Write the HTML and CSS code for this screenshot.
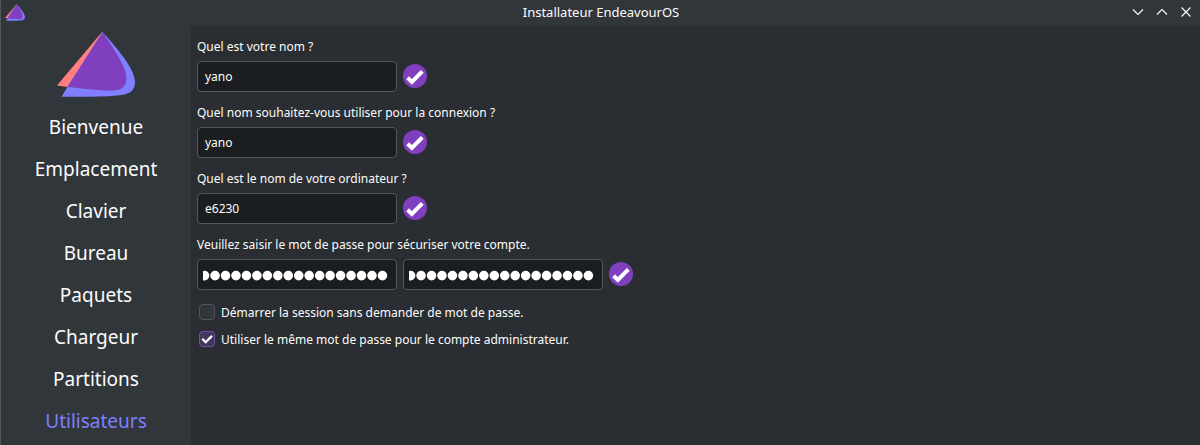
FILE: index.html
```
<!DOCTYPE html>
<html lang="fr">
<head>
<meta charset="utf-8">
<title>Installateur EndeavourOS</title>
<link rel="stylesheet" href="styles.css">
</head>
<body>
<svg class="defs" aria-hidden="true">
  <symbol id="logo" viewBox="0 0 78 65">
    <path fill="#ff7f7f" d="M45 0L0 53.500L10.500 55L46 .5z"/>
    <path fill="#7f7fff" d="M45.500 0C58 14 78 36 78 50C78 60 71 62.500 60 63.500C44 65 25 64.800 4.500 64.700L11 54z"/>
    <path fill="#7f3fbf" d="M45.500 0C57 17 69.500 35 69.500 46C69.500 54 65 58.500 56 58.500C42 58.700 25 56.500 10.500 55z"/>
  </symbol>
  <symbol id="badge" viewBox="0 0 24 24">
    <circle cx="12" cy="12" r="12" fill="#7f3fbf"/>
    <path d="M4.600 13.800L8.900 18L19.300 7.400" fill="none" stroke="#fff" stroke-width="4"/>
  </symbol>
</svg>
<div class="window">
  <header class="titlebar">
    <svg class="app-icon"><use href="#logo"/></svg>
    <h1 class="title">Installateur EndeavourOS</h1>
    <div class="controls">
      <svg viewBox="0 0 12 12"><path d="M1 3.500L6 8.500L11 3.500"/></svg>
      <svg viewBox="0 0 12 12"><path d="M1 8.500L6 3.500L11 8.500"/></svg>
      <svg viewBox="0 0 12 12"><path d="M1.500 1.500L10.500 10.500M10.500 1.500L1.500 10.500"/></svg>
    </div>
  </header>
  <div class="body">
    <nav class="sidebar">
      <svg class="logo"><use href="#logo"/></svg>
      <ul class="steps">
        <li>Bienvenue</li>
        <li>Emplacement</li>
        <li>Clavier</li>
        <li>Bureau</li>
        <li>Paquets</li>
        <li>Chargeur</li>
        <li>Partitions</li>
        <li class="current">Utilisateurs</li>
      </ul>
    </nav>
    <main class="content">
      <section class="group">
        <div class="label">Quel est votre nom ?</div>
        <div class="row"><div class="field">yano</div><svg class="badge"><use href="#badge"/></svg></div>
      </section>
      <section class="group">
        <div class="label">Quel nom souhaitez-vous utiliser pour la connexion ?</div>
        <div class="row"><div class="field">yano</div><svg class="badge"><use href="#badge"/></svg></div>
      </section>
      <section class="group">
        <div class="label">Quel est le nom de votre ordinateur ?</div>
        <div class="row"><div class="field">e6230</div><svg class="badge"><use href="#badge"/></svg></div>
      </section>
      <section class="group">
        <div class="label">Veuillez saisir le mot de passe pour sécuriser votre compte.</div>
        <div class="row">
          <div class="field secret"><svg class="dots" viewBox="0 0 188 29"><path d="M1.600 15.600H180"/></svg></div>
          <div class="field secret"><svg class="dots" viewBox="0 0 188 29"><path d="M1.600 15.600H180"/></svg></div>
          <svg class="badge"><use href="#badge"/></svg>
        </div>
      </section>
      <div class="options">
        <div class="option"><span class="box"></span><span class="caption">Démarrer la session sans demander de mot de passe.</span></div>
        <div class="option"><span class="box checked"><svg viewBox="0 0 14 14"><path d="M2.300 6.800L5.700 10.200L12 3.900"/></svg></span><span class="caption">Utiliser le même mot de passe pour le compte administrateur.</span></div>
      </div>
    </main>
  </div>
</div>
</body>
</html>
```
FILE: styles.css
```
* { box-sizing: border-box; }
body {
  margin: 0;
  background: #2a2e32;
  color: #fcfcfc;
  font: 12px/18px "Noto Sans", sans-serif;
}
.defs { position: absolute; width: 0; height: 0; }
.window {
  display: flex;
  flex-direction: column;
  width: 1200px;
  height: 445px;
  overflow: hidden;
  border-left: 1px solid #53585c;
}
.titlebar {
  display: grid;
  grid-template-columns: 101px 1fr 100px;
  align-items: center;
  height: 26px;
  padding-bottom: 2px;
  background: #31363b;
}
.app-icon { width: 20px; height: 17px; margin: 0 0 0 4px; }
.title {
  margin: 0;
  text-align: center;
  font-size: 13px;
  font-weight: 400;
  line-height: 18px;
}
.controls {
  display: flex;
  justify-content: flex-end;
  gap: 12px;
  padding-right: 8px;
}
.controls svg {
  width: 12px;
  height: 12px;
  fill: none;
  stroke: #fcfcfc;
  stroke-width: 1.2;
}
.body { display: flex; flex: 1; min-height: 0; }
.sidebar {
  width: 190px;
  padding-top: 6px;
  background: #31363b;
}
.logo { display: block; width: 78px; height: 65px; margin-left: 56px; }
.steps {
  margin: 9px 0 0;
  padding: 0;
  list-style: none;
  text-align: center;
  font-size: 19px;
  line-height: 42px;
}
.steps .current { color: #7f7fff; }
.content { flex: 1; padding: 12px 6px; }
.group { height: 66px; }
.label { height: 23px; }
.row { display: flex; gap: 6px; }
.field {
  width: 200px;
  height: 31px;
  padding: 0 7px;
  border: 1px solid #53575a;
  border-radius: 4px;
  background: #1b1e20;
  line-height: 29px;
}
.badge { width: 24px; height: 24px; margin-top: 3px; }
.secret { padding: 0 5px; }
.dots {
  display: block;
  width: 188px;
  height: 29px;
  overflow: hidden;
  fill: none;
  stroke: #fff;
  stroke-width: 9.6;
  stroke-linecap: round;
  stroke-dasharray: 0 10.46;
}
.options { padding: 1px 0 0 2px; }
.option {
  display: flex;
  align-items: center;
  gap: 6px;
  height: 18px;
  margin-bottom: 9px;
}
.caption { padding-top: 2px; }
.box {
  display: flex;
  width: 16px;
  height: 16px;
  border: 1px solid #53575a;
  border-radius: 4px;
  background: #31363b;
}
.checked { border-color: #7350a8; background: #41375c; }
.box svg {
  width: 14px;
  height: 14px;
  fill: none;
  stroke: #fff;
  stroke-width: 2.3;
}
```
